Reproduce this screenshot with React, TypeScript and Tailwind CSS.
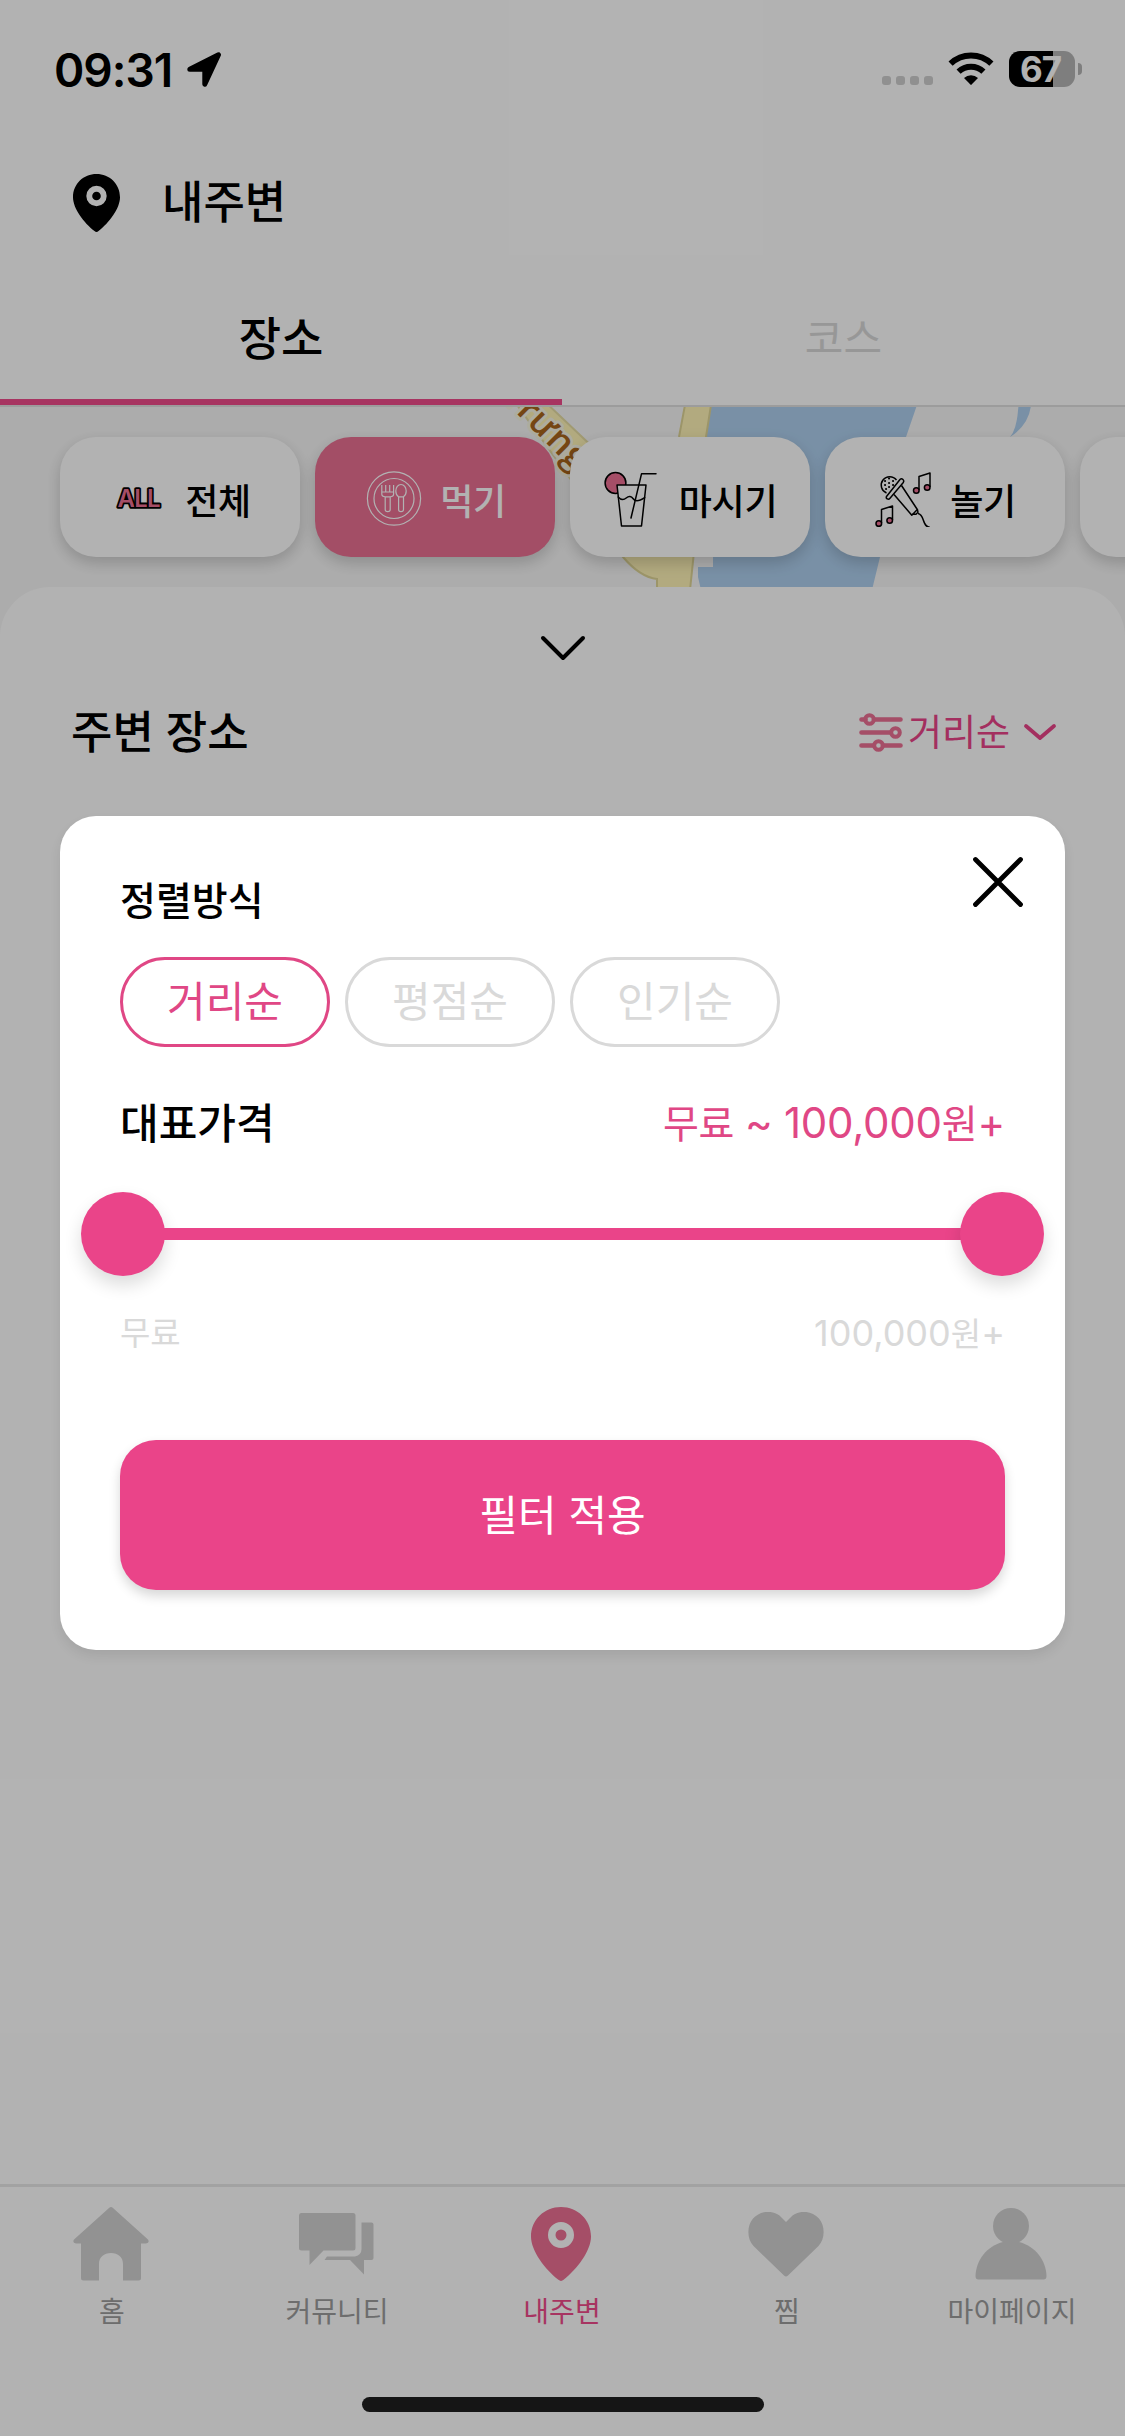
import React, { useState } from 'react';

const PINK = '#ea4489';
const SOFT_PINK = '#ec7094';

type IconProps = { className?: string };

const LocationArrow = () => (
    <svg width="35" height="35" viewBox="0 0 35 35" className="text-black">
        <path
            d="M31.5 2.8 17.8 32.2V17.2H2.8Z"
            fill="currentColor"
            stroke="currentColor"
            strokeWidth="5"
            strokeLinejoin="round"
        />
    </svg>
);

const Wifi = () => (
    <svg width="46" height="34" viewBox="0 0 46 34" fill="none" stroke="#000" strokeWidth="6">
        <path d="M2.6 11.6A29.5 29.5 0 0 1 43.4 11.6" />
        <path d="M10.6 19.6A18 18 0 0 1 35.4 19.6" />
        <path d="M16 25.9A10.4 10.4 0 0 1 30 25.9L23.6 32.6Q23 33.2 22.4 32.6Z" fill="#000" stroke="none" />
    </svg>
);

const Pin: React.FC<IconProps> = ({ className }) => (
    <svg viewBox="0 0 60 74" className={className}>
        <path
            fillRule="evenodd"
            fill="currentColor"
            d="M30 0C46.5 0 60 12.6 60 29.5C60 44 46 62 32.6 72.8Q30 75 27.4 72.8C14 62 0 44 0 29.5C0 12.6 13.5 0 30 0ZM30 15A13 13 0 1 0 30 41A13 13 0 1 0 30 15ZM30 22.5A5.5 5.5 0 1 1 30 33.5A5.5 5.5 0 1 1 30 22.5Z"
        />
    </svg>
);

const AllIcon = () => (
    <svg width="60" height="60" viewBox="0 0 60 60">
        <text
            x="30"
            y="40"
            textAnchor="middle"
            textLength="43"
            fontSize="24"
            fontWeight="600"
            fontFamily="Inter, sans-serif"
            fill={SOFT_PINK}
            stroke="#000"
            strokeWidth="3.6"
            strokeLinejoin="round"
            paintOrder="stroke"
        >
            ALL
        </text>
    </svg>
);

const PlateIcon = () => (
    <svg width="60" height="60" viewBox="0 0 60 60" fill="none" stroke="#fff" strokeWidth="1.2" strokeLinejoin="round">
        <circle cx="30" cy="31.5" r="26.6" />
        <circle cx="30" cy="31.5" r="20" />
        <path d="M17.8 18v9q0 2.6 3.4 2.8V42.5q0 2.2 2.500 2.2t2.500-2.2V29.800q3.400-.2 3.400-2.800V18M21.700 18v7M25.700 18v7M17.800 25h11.800M21.200 29.800h5" />
        <path d="M37 17.5c-3 0-5.2 3-5.2 6.6 0 3 1.2 4.8 2.8 5.7V42.5q0 2.2 2.400 2.2t2.500-2.2V29.800c1.600-1 2.700-2.800 2.700-5.700 0-3.600-2.200-6.600-5.200-6.600ZM34.600 29.800h4.900" />
    </svg>
);

const DrinkIcon = () => (
    <svg width="60" height="60" viewBox="0 0 60 60" fill="none" stroke="#000" strokeWidth="1.5" strokeLinejoin="round" strokeLinecap="round">
        <circle cx="12.5" cy="16" r="10.4" fill={SOFT_PINK} />
        <path d="M14 18H43L38.5 59H18.5Z" className="fill-white" />
        <path d="M15.2 30q4 4.5 8 1t7 .8 11.5 -1.2" />
        <path d="M53 6.8H38.5L28 51" />
    </svg>
);

const MicIcon = () => (
    <svg width="60" height="60" viewBox="0 0 60 60" fill="none" stroke="#000" strokeWidth="1.5" strokeLinejoin="round">
        <path d="M12.5 26A8.5 8.5 0 1 1 22.5 13" />
        <path d="M26.2 12.2 12.7 29.2q-1.2 1.7.6 2.7 1.5.8 2.7-.6L29.3 15.5q1.2-1.6-.3-3-1.5-1.4-2.8-.3Z" />
        <path d="M20 27.5 37.8 48.2 43.3 42.5 27.5 18.5M37.8 48.2l1.2-1.6M39 47l3 .3 2-2-.6-2.8M44 46.5c7 1 3.5 13 12 14" />
        <path d="M11 14h.1M15 11.5h.1M19 14h.1M11 18h.1M15 16h.1M19 18h.1M15 20h.1M12 22h.1" strokeWidth="2" strokeLinecap="round" />
        <path d="M45 23V9.5L56 6V20" />
        <circle cx="42.3" cy="23.5" r="2.8" fill={SOFT_PINK} />
        <circle cx="53.2" cy="20.5" r="2.8" fill={SOFT_PINK} />
        <path d="M7.5 56V42.5L18.5 39V53" />
        <circle cx="4.8" cy="56.5" r="2.8" fill={SOFT_PINK} />
        <circle cx="15.7" cy="53.5" r="2.8" fill={SOFT_PINK} />
    </svg>
);

const SlidersIcon = () => (
    <svg width="44" height="39" viewBox="0 0 44 39" fill="none" stroke={SOFT_PINK} strokeWidth="4.6" strokeLinecap="round">
        <path d="M2.5 6.5h4M15 6.5h26.5M2.5 19.5h29M2.5 32.5h12M24 32.5h17.5" />
        <circle cx="10.5" cy="6.5" r="4.3" strokeWidth="4" />
        <circle cx="36.5" cy="19.5" r="4.3" strokeWidth="4" />
        <circle cx="19.5" cy="32.5" r="4.3" strokeWidth="4" />
    </svg>
);

const HomeIcon = () => (
    <svg width="76" height="74" viewBox="0 0 76 74" fill="currentColor">
        <path d="M36 1Q38 -.8 40 1L75 32.5Q77 36 73 36.5H68V71Q68 73.5 65.5 73.5H50V57C50 50 45 46 38 46S26 50 26 57V73.5H10.5Q8 73.5 8 71V36.5H3Q-1 36 1 32.5Z" />
    </svg>
);

const ChatIcon = () => (
    <svg width="75" height="62" viewBox="0 0 75 62" fill="currentColor">
        <path d="M2 0H54Q56.5 0 56.5 2.5V35Q56.5 37.5 54 37.5H24.5L10.5 52V37.5H2.5Q0 37.5 0 35V2.5Q0 0 2 0Z" />
        <path d="M62.5 9.5H72.5Q74.5 9.5 74.5 11.5V45Q74.5 47 72.5 47H65V61.5L51 47H25.5L28 43.5H56Q62.5 42 62.5 36Z" />
    </svg>
);

const HeartIcon = () => (
    <svg width="76" height="65" viewBox="0 0 76 65" fill="currentColor">
        <path d="M36 63.5 5.5 34C-1 27.5-1.5 14 5 6.5C12.5-1.5 24-2 31.5 3.5L38 10L44.5 3.5C52-2 63.5-1.5 71 6.5C77.5 14 77 27.5 70.5 34L40 63.5Q38 65.5 36 63.5Z" />
    </svg>
);

const PersonIcon = () => (
    <svg width="72" height="72" viewBox="0 0 72 72" fill="currentColor">
        <circle cx="36" cy="18" r="18" />
        <path d="M28 34H44C60 38 71 52 71.5 68Q71.5 71.5 68.5 71.5H3.5Q.5 71.5 .5 68C1 52 12 38 28 34Z" />
    </svg>
);

const MapStrip = () => (
    <svg width="1125" height="180" viewBox="0 407 1125 180" className="absolute left-0 top-0">
        <path d="M512 398 541 398 640 492 600 520Z" fill="#fff4b7" stroke="#e6dda4" strokeWidth="2" />
        <path d="M711 405H917L906 437 880 557 872 590H701L698 577V567H713V557L706 437Z" fill="#aecfee" />
        <path d="M685 405H711L706 437 690 590H657V579Q640 577 623 557L650 530 679 437Z" fill="#fff4b7" stroke="#e0d697" strokeWidth="2" />
        <path d="M1018.5 405H1031Q1029 425 1010 437Q1017 430 1018.5 405Z" fill="#aecfee" />
        <text
            transform="translate(501 398) rotate(45)"
            fontSize="36"
            fontWeight="600"
            fontFamily="'Open Sans', sans-serif"
            fill="#a8651c"
            stroke="#f8f6e4"
            strokeWidth="6"
            strokeLinejoin="round"
            paintOrder="stroke"
        >
            Trưng
        </text>
    </svg>
);

const categories = [
    { label: '전체', icon: <AllIcon />, active: false },
    { label: '먹기', icon: <PlateIcon />, active: true },
    { label: '마시기', icon: <DrinkIcon />, active: false },
    { label: '놀기', icon: <MicIcon />, active: false },
    { label: '', icon: null, active: false },
];

const navItems = [
    { label: '홈', icon: <HomeIcon /> },
    { label: '커뮤니티', icon: <ChatIcon /> },
    { label: '내주변', icon: <Pin className="w-[60px] h-[74px]" />, active: true },
    { label: '찜', icon: <HeartIcon /> },
    { label: '마이페이지', icon: <PersonIcon /> },
];

const sortOptions = ['거리순', '평점순', '인기순'];

const StatusBar = () => (
    <div className="h-[140px] pl-[54px] pr-[43px] pt-[51px] flex items-start justify-between">
        <div className="flex items-center gap-[15px] h-[37px]">
            <span className="text-[46px] leading-none font-semibold tracking-[-1px]">09:31</span>
            <LocationArrow />
        </div>
        <div className="flex items-start">
            <div className="flex gap-[5px] mt-[25px] mr-[15px]">
                {[0, 1, 2, 3].map((i) => (
                    <span key={i} className="size-[9px] rounded-[3px] bg-[#cfcfcf]" />
                ))}
            </div>
            <div className="mt-px mr-[15px]">
                <Wifi />
            </div>
            <div className="w-[66px] h-9 pr-[3px] rounded-[11px] flex items-center justify-center bg-[linear-gradient(to_right,#000_67%,#b5b5b5_67%)]">
                <span className="text-white text-[35px] leading-9 font-bold tracking-[-1px]">67</span>
            </div>
            <div className="w-1 h-3 mt-3 ml-[3px] rounded-r-full bg-[#b5b5b5]" />
        </div>
    </div>
);

const FilterModal: React.FC = () => {
    const [sort, setSort] = useState(sortOptions[0]);

    return (
        <div className="absolute left-[60px] top-[816px] w-[1005px] h-[834px] rounded-[36px] bg-white px-[60px] pt-[61px] shadow-[0_6px_12px_rgba(0,0,0,0.08)]">
            <button className="absolute right-[40px] top-[39px]">
                <svg width="54" height="54" viewBox="0 0 54 54" stroke="#000" strokeWidth="4.8" strokeLinecap="round">
                    <path d="M4.5 4.5 49.5 49.5M49.5 4.5 4.5 49.5" />
                </svg>
            </button>

            <h2 className="text-[39px] leading-[48px] font-medium">정렬방식</h2>
            <div className="flex gap-[15px] mt-[32px]">
                {sortOptions.map((option) => (
                    <button
                        key={option}
                        onClick={() => setSort(option)}
                        className={`w-[210px] h-[90px] rounded-full border-[3px] text-[42px] leading-none ${sort === option
                            ? 'border-[#e04785] text-[#e04785]'
                            : 'border-[#d9d9d9] text-[#d9d9d9]'
                            }`}
                    >
                        {option}
                    </button>
                ))}
            </div>

            <div className="flex justify-between items-center mt-[47px] h-[60px]">
                <h2 className="text-[42px] leading-none font-medium">대표가격</h2>
                <p className="text-[39px] leading-none tracking-[-0.25px] text-[#e04785] whitespace-nowrap pb-0.5">
                    무료 <span className="text-[42px]">~ 100,000</span>원<span className="text-[42px]">+</span>
                </p>
            </div>

            <div className="-mx-[39px] mt-[38px] h-[84px] flex items-center">
                <div className="size-[84px] shrink-0 rounded-full bg-[#ea4489] shadow-[0_9px_18px_rgba(0,0,0,0.14)]" />
                <div className="h-3 flex-1 -mx-1 bg-[#ea4489]" />
                <div className="size-[84px] shrink-0 rounded-full bg-[#ea4489] shadow-[0_9px_18px_rgba(0,0,0,0.14)]" />
            </div>

            <div className="flex justify-between items-center mt-[32px] h-[50px] text-[33px] leading-none text-[#d9d9d9]">
                <span>무료</span>
                <span><span className="text-[36px]">100,000</span>원<span className="text-[36px]">+</span></span>
            </div>

            <button className="w-full h-[150px] mt-[82px] rounded-[36px] bg-[#ea4489] text-white text-[42px] shadow-[0_6px_12px_rgba(0,0,0,0.16)]">
                필터 적용
            </button>
        </div>
    );
};

const App: React.FC = () => {
    return (
        <div className="relative flex flex-col w-[1125px] h-[2436px] overflow-hidden bg-white text-black font-[Inter,'Noto_Sans_CJK_KR',sans-serif]">
            <StatusBar />

            <header className="h-[125px] pl-[73px] flex items-center gap-[42px]">
                <Pin className="w-[47px] h-[58px]" />
                <h1 className="text-[45px] leading-none font-medium">내주변</h1>
            </header>

            <div className="h-[142px] flex border-b-2 border-[#e0e0e0]">
                <div className="w-[562px] border-b-[6px] border-[#f04b8c] flex items-center justify-center pt-[12px] text-[46px] leading-none font-medium">장소</div>
                <div className="flex-1 flex items-center justify-center pt-[8px] text-[42px] leading-none text-[#d9d9d9]">코스</div>
            </div>

            <div className="relative h-[240px] bg-[#f7f7f7]">
                <MapStrip />
                <div className="relative flex gap-[15px] pl-[60px] pt-[30px] overflow-hidden h-[240px]">
                    {categories.map(({ label, icon, active }, i) => (
                        <div
                            key={i}
                            className={`w-[240px] h-[120px] shrink-0 rounded-[36px] flex items-center justify-center gap-[16px] shadow-[0_6px_15px_rgba(0,0,0,0.18)] ${active ? 'bg-[#ea7093] text-white' : 'bg-white'}`}
                        >
                            {icon}
                            <span className="pt-2.5 text-[36px] leading-none font-medium tracking-[-0.3px]">{label}</span>
                        </div>
                    ))}
                </div>
            </div>

            <main className="relative flex-1 -mt-[60px] rounded-t-[50px] bg-white">
                <div className="flex justify-center pt-[47px]">
                    <svg width="48" height="28" viewBox="0 0 48 28" fill="none" stroke="#000" strokeWidth="4" strokeLinecap="round" strokeLinejoin="round">
                        <path d="M4 4 24 24 44 4" />
                    </svg>
                </div>
                <div className="flex items-center justify-between mt-[40px] h-[60px] pl-[71px] pr-[68px]">
                    <h2 className="text-[45px] leading-none font-medium whitespace-nowrap">주변 장소</h2>
                    <button className="flex items-center text-[#ea4489]">
                        <SlidersIcon />
                        <span className="text-[37px] leading-none ml-[5px] mr-[13px]">거리순</span>
                        <svg width="34" height="18" viewBox="0 0 34 18" fill="none" stroke={PINK} strokeWidth="3.8" strokeLinecap="round" strokeLinejoin="round">
                            <path d="M3 3 17 15 31 3" />
                        </svg>
                    </button>
                </div>
            </main>

            <nav className="relative h-[252px] bg-white border-t-[3px] border-[#e9e9e9] flex">
                {navItems.map(({ label, icon, active }) => (
                    <div key={label} className="w-[225px] flex flex-col items-center pt-[19px]">
                        <div className={`h-[76px] mr-[3px] flex items-center justify-center ${active ? 'text-[#ec7094]' : 'text-[#d2d2d2]'}`}>{icon}</div>
                        <span className={`mt-[16px] mr-px text-[28px] leading-none whitespace-nowrap ${active ? 'text-[#f04b8c]' : 'text-[#9c9c9c]'}`}>{label}</span>
                    </div>
                ))}
            </nav>

            <div className="absolute inset-0 bg-black/30" />
            <FilterModal />
            <div className="absolute left-[362px] bottom-[24px] w-[402px] h-[15px] rounded-full bg-[#151515]" />
        </div>
    );
};

export default App;
